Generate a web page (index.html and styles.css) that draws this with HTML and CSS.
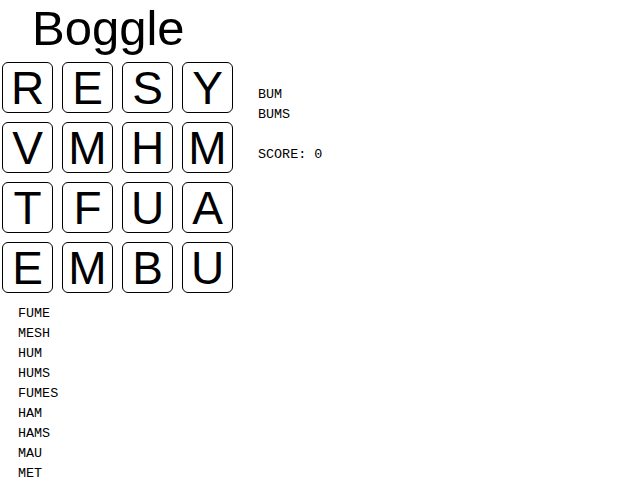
FILE: index.html
```html
<!DOCTYPE html>
<html>
<head>
<meta charset="utf-8">
<link rel="stylesheet" href="styles.css">
</head>
<body>
<h1 class="title">Boggle</h1>
<div class="game">
  <div class="board">
    <div class="tile">R</div><div class="tile">E</div><div class="tile">S</div><div class="tile">Y</div>
    <div class="tile">V</div><div class="tile">M</div><div class="tile">H</div><div class="tile">M</div>
    <div class="tile">T</div><div class="tile">F</div><div class="tile">U</div><div class="tile">A</div>
    <div class="tile">E</div><div class="tile">M</div><div class="tile">B</div><div class="tile">U</div>
  </div>
  <div class="side">
    <ul class="words">
      <li>BUM</li>
      <li>BUMS</li>
    </ul>
    <div class="score">SCORE: 0</div>
  </div>
</div>
<ul class="words found">
  <li>FUME</li>
  <li>MESH</li>
  <li>HUM</li>
  <li>HUMS</li>
  <li>FUMES</li>
  <li>HAM</li>
  <li>HAMS</li>
  <li>MAU</li>
  <li>MET</li>
</ul>
</body>
</html>
```
FILE: styles.css
```css
html, body {
  margin: 0;
  padding: 0;
  background: #fff;
  color: #000;
}
body {
  font-family: "Liberation Sans", Arial, sans-serif;
}
.title {
  margin: 0;
  padding-left: 32px;
  font-size: 49px;
  font-weight: normal;
  line-height: 56px;
}
.game {
  display: flex;
  align-items: flex-start;
  margin-top: 6px;
  padding-left: 2px;
}
.board {
  display: grid;
  grid-template-columns: repeat(4, 51px);
  grid-auto-rows: 51px;
  gap: 9px;
}
.tile {
  box-sizing: border-box;
  border: 1px solid #000;
  border-radius: 6px;
  display: flex;
  align-items: center;
  justify-content: center;
  font-size: 46px;
  line-height: 1;
}
.side {
  margin-left: 25px;
  padding-top: 23px;
}
.words {
  list-style: none;
  margin: 0;
  padding: 0;
  font-family: "Liberation Mono", "Courier New", monospace;
  font-size: 13.4px;
  line-height: 20px;
}
.score {
  margin-top: 20px;
  font-family: "Liberation Mono", "Courier New", monospace;
  font-size: 13.4px;
  line-height: 20px;
}
.found {
  margin-top: 11px;
  padding-left: 18px;
}
```
